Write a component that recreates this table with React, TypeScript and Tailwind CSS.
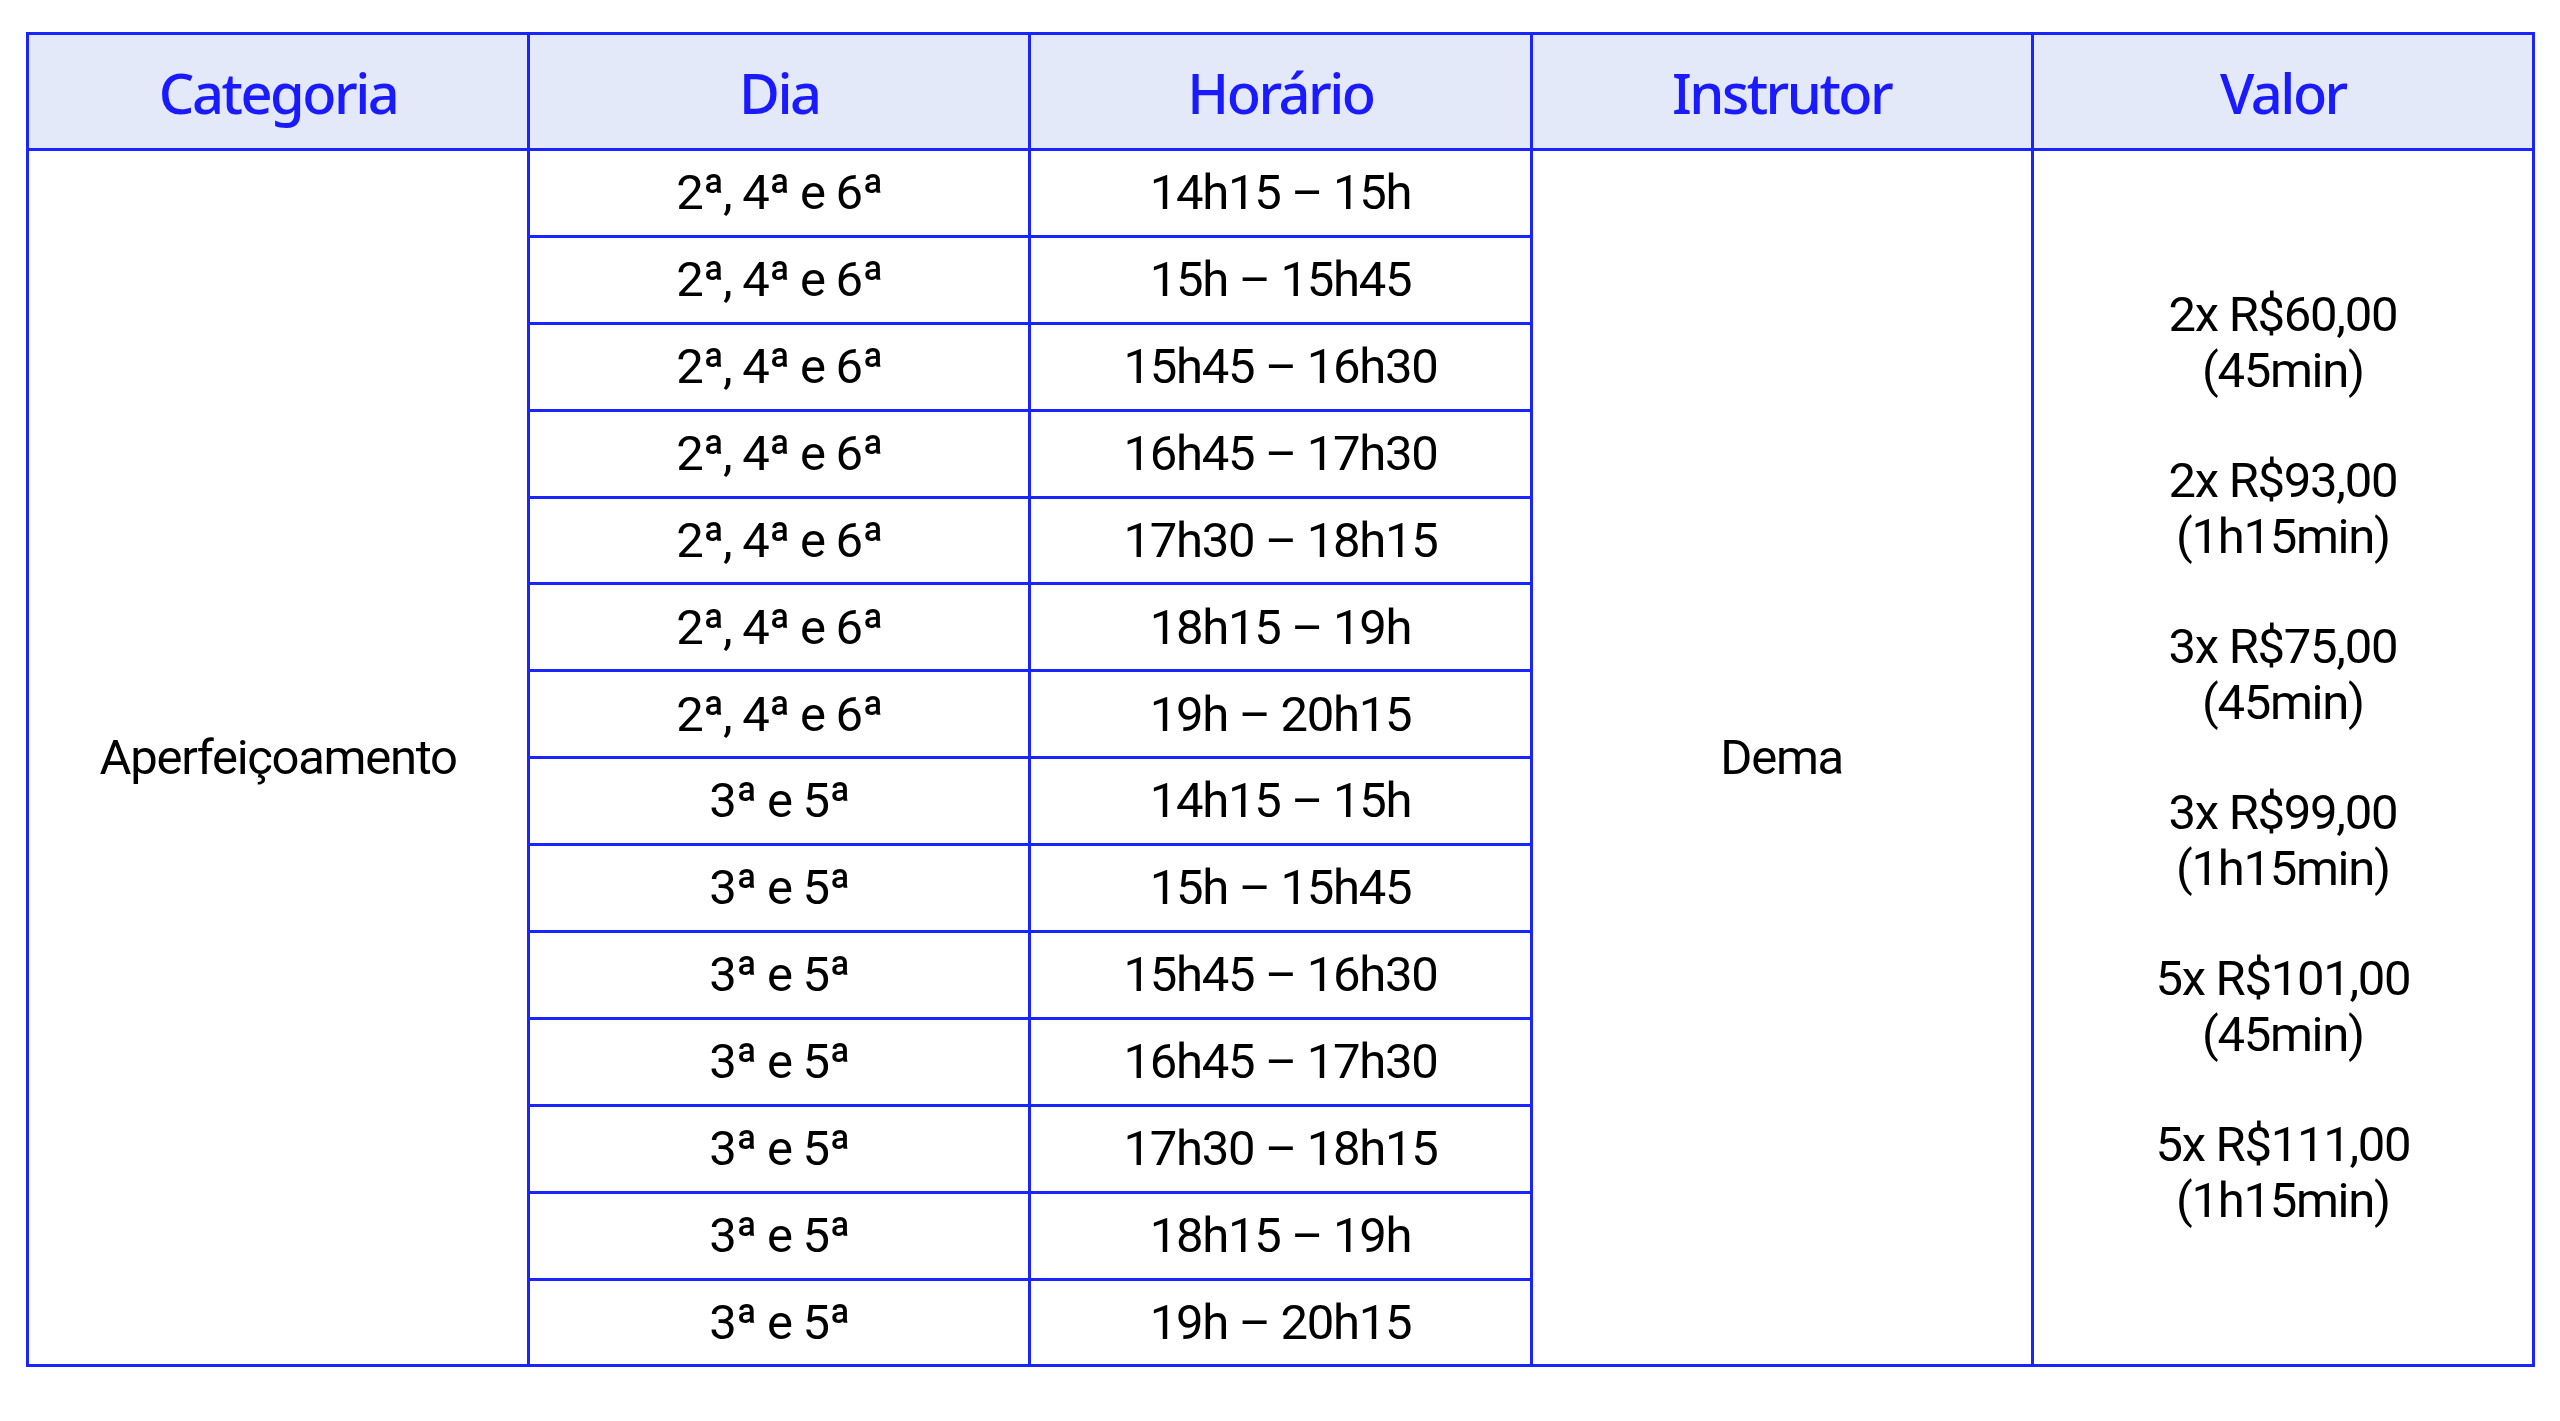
import React from "react";

const horarios = [
  "14h15 – 15h",
  "15h – 15h45",
  "15h45 – 16h30",
  "16h45 – 17h30",
  "17h30 – 18h15",
  "18h15 – 19h",
  "19h – 20h15",
];

const rows = [
  ...horarios.map((h) => ({ dia: "2ª, 4ª e 6ª", horario: h })),
  ...horarios.map((h) => ({ dia: "3ª e 5ª", horario: h })),
];

const valores = [
  ["2x R$60,00", "(45min)"],
  ["2x R$93,00", "(1h15min)"],
  ["3x R$75,00", "(45min)"],
  ["3x R$99,00", "(1h15min)"],
  ["5x R$101,00", "(45min)"],
  ["5x R$111,00", "(1h15min)"],
];

const cell = "border-[3px] border-[#1a24ff] text-center align-middle p-0";

export default function App() {
  return (
    <div className="min-h-screen bg-white pt-[32px] pl-[26px]">
      <table
        className="w-[2509px] table-fixed border-collapse text-black"
        style={{ fontFamily: "Roboto, 'Liberation Sans', sans-serif" }}
      >
        <thead>
          <tr className="h-[116px] bg-[#e4e9fa]">
            {["Categoria", "Dia", "Horário", "Instrutor", "Valor"].map((t) => (
              <th
                key={t}
                className={`${cell} font-['Noto_Sans','Open_Sans',sans-serif] text-[56px] font-medium tracking-[-2.5px] text-[#1a1aff]`}
              >
                {t}
              </th>
            ))}
          </tr>
        </thead>
        <tbody className="text-[49px] font-normal tracking-[-1.3px]">
          {rows.map((r, i) => (
            <tr key={i} className="h-[86.9px]">
              {i === 0 && (
                <td rowSpan={14} className={cell}>
                  Aperfeiçoamento
                </td>
              )}
              <td className={cell}>{r.dia}</td>
              <td className={cell}>{r.horario}</td>
              {i === 0 && (
                <td rowSpan={14} className={cell}>
                  Dema
                </td>
              )}
              {i === 0 && (
                <td rowSpan={14} className={cell}>
                  <div className="flex flex-col gap-[55px] leading-[55.5px]">
                    {valores.map(([v, d]) => (
                      <p key={v}>
                        {v}
                        <br />
                        {d}
                      </p>
                    ))}
                  </div>
                </td>
              )}
            </tr>
          ))}
        </tbody>
      </table>
    </div>
  );
}
